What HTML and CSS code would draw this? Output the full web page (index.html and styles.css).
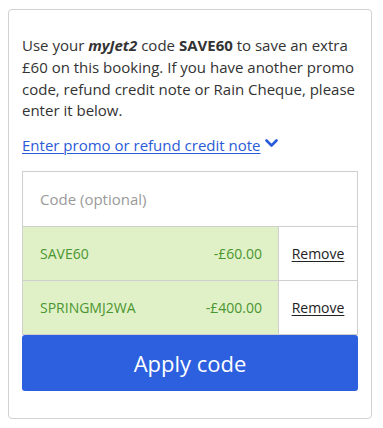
FILE: index.html
```html
<!DOCTYPE html>
<html lang="en">
<head>
<meta charset="utf-8">
<link rel="stylesheet" href="styles.css">
</head>
<body>
<div class="card">
  <p class="intro">Use your <em>myJet2</em> code <strong>SAVE60</strong> to save an extra £60 on this booking. If you have another promo code, refund credit note or Rain Cheque, please enter it below.</p>
  <div class="toggle"><a href="#" class="toggle-link">Enter promo or refund credit note</a><svg class="chev" width="13" height="9" viewBox="0 0 13 9"><path d="M1.5 1.5 L6.5 6.5 L11.5 1.5" fill="none" stroke="#2a5bd7" stroke-width="2.6" stroke-linecap="round" stroke-linejoin="round"/></svg></div>
  <div class="codes">
    <div class="input-row"><input class="code-input" type="text" placeholder="Code (optional)"></div>
    <div class="promo-row">
      <div class="promo-cell"><span>SAVE60</span><span>-£60.00</span></div>
      <div class="remove-cell"><a href="#" class="remove">Remove</a></div>
    </div>
    <div class="promo-row">
      <div class="promo-cell"><span>SPRINGMJ2WA</span><span>-£400.00</span></div>
      <div class="remove-cell"><a href="#" class="remove">Remove</a></div>
    </div>
  </div>
  <button class="apply">Apply code</button>
</div>
</body>
</html>
```
FILE: styles.css
```css
* { box-sizing: border-box; }
html, body { margin: 0; padding: 0; background: #fff; }
body { font-family: "Open Sans", "Noto Sans", sans-serif; color: #2b2b2b; padding: 9px 11px 9px 8px; }
.card {
  border: 1px solid #d2d2d2;
  border-radius: 4px;
  height: 410px;
  padding: 25px 13px 26px 13px;
}
.intro { margin: 0; font-size: 15px; line-height: 21.8px; color: #333; }
.intro em { font-style: italic; font-weight: 700; }
.intro strong { font-weight: 700; }
.toggle { margin-top: 12px; line-height: 22px; font-size: 15px; display: flex; align-items: center; }
.toggle-link { color: #2a5bd7; text-decoration: underline; text-underline-offset: 2px; text-decoration-thickness: 1px; }
.chev { margin-left: 4px; margin-top: -3px; }
.codes { margin-top: 15px; border: 1px solid #cfcfcf; border-bottom: none; }
.input-row { height: 55px; border-bottom: 1px solid #cfcfcf; display: flex; }
.code-input {
  flex: 1; border: none; outline: none; padding: 0 0 0 17px; margin: 0;
  font-family: "Open Sans", sans-serif; font-size: 15px; color: #333; background: #fff;
}
.code-input::placeholder { color: #9a9a9a; }
.promo-row { display: flex; height: 54px; border-bottom: 1px solid #cfcfcf; }
.promo-cell {
  flex: 1; background: #e0f0c7; display: flex; justify-content: space-between; align-items: center;
  padding: 0 16px 0 17px; font-size: 14px; color: #4a9630;
}
.remove-cell { width: 79px; border-left: 1px solid #cfcfcf; display: flex; align-items: center; justify-content: center; }
.remove { color: #222; font-size: 14px; text-decoration: underline; text-underline-offset: 2px; }
.apply {
  display: block; width: 100%; height: 56px; margin: 0; border: none; border-radius: 3px;
  background: #2c60df; color: #fff; font-family: "Open Sans", sans-serif; font-size: 22px;
}
```
